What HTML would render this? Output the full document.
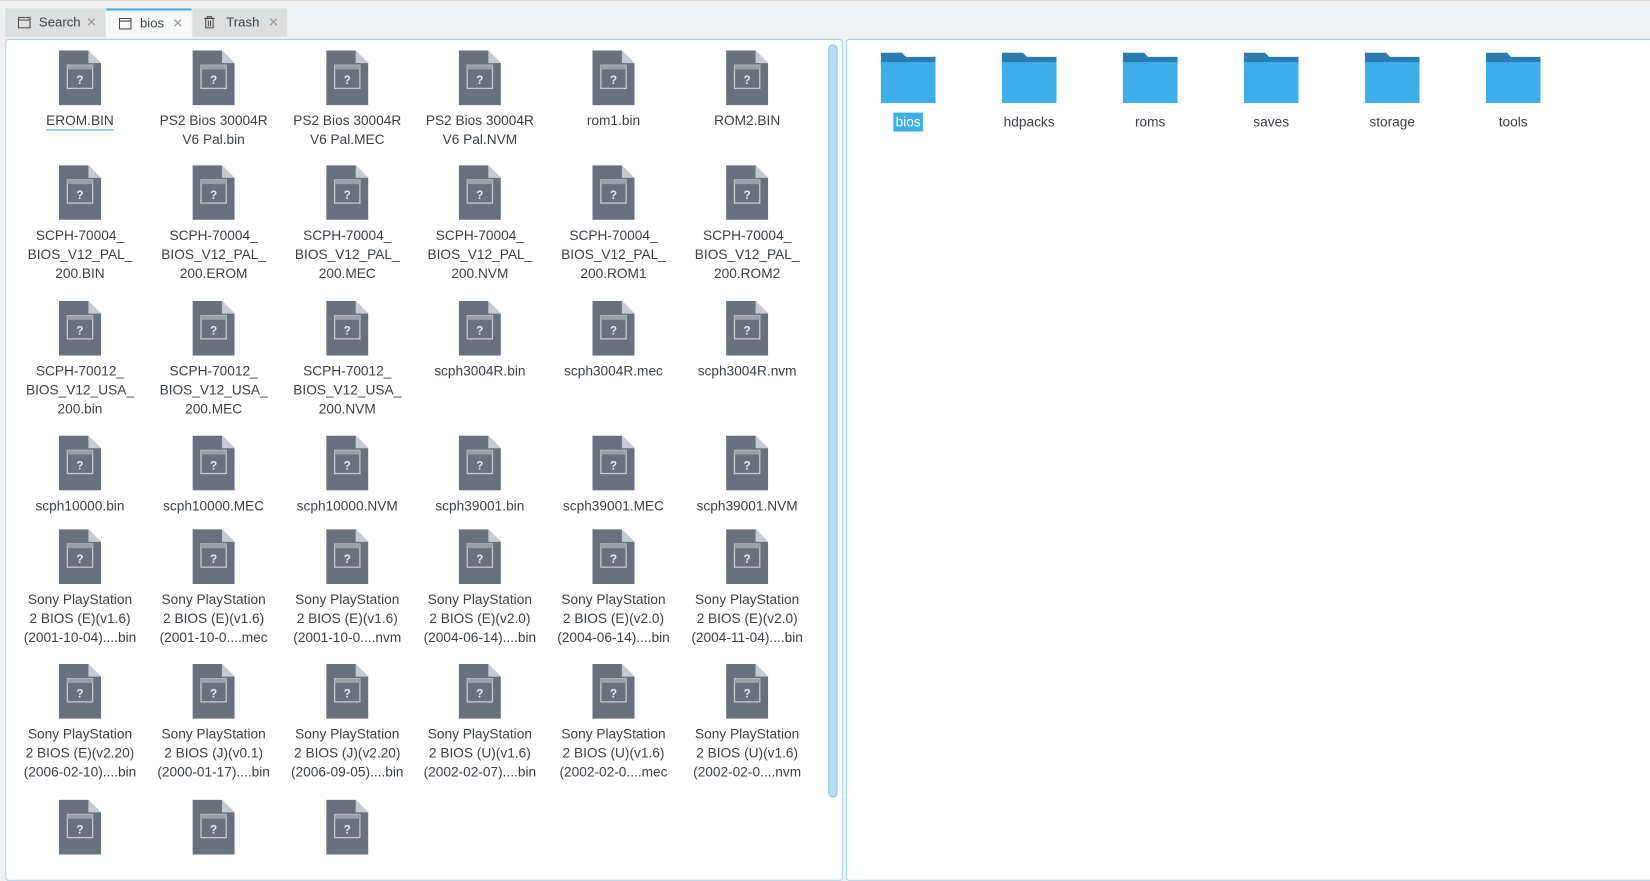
<!DOCTYPE html>
<html><head><meta charset="utf-8">
<style>
*{margin:0;padding:0;box-sizing:border-box}
body{width:1650px;height:825px;background:#eff0f1;overflow:hidden;font-family:"Liberation Sans","DejaVu Sans",sans-serif;color:#31363b}
#w{position:absolute;left:0;top:0;width:1568px;height:784px;transform:scale(1.05230);transform-origin:0 0}
.tabs{position:absolute;left:0;top:0;width:1568px;height:36px;background:#eff0f1;border-top:1px solid #d8d8d8}
.tab{position:absolute;top:7px;height:27px;background:#dcdedf;font-size:12.5px;line-height:27px;padding-left:32px;color:#3c4043}
.tab .x{position:absolute;right:8px;top:0;color:#999;font-size:12px}
.tab.act{background:#f7f8f8;border-top:2px solid #3daee9;line-height:25px}
.pane{position:absolute;top:37px;height:800px;background:#fff;border:1px solid #a9d3ef;border-radius:3px}
.sb{position:absolute;left:787px;top:42px;width:9px;height:716px;background:#b8dcf2;border:1px solid #93c7ea;border-radius:5px}
.c{position:absolute;width:126px;text-align:center;font-size:13px;line-height:18px;color:#3a3f44}
.c svg{display:block;margin:0 auto 6px}
.c span{display:inline-block}
.f svg{margin-bottom:9px}
</style></head><body>
<svg width="0" height="0" style="position:absolute">
<defs>
<symbol id="d" viewBox="0 0 40 52">
<path d="M0 0H28L40 12V52H0Z" fill="#69717e"/>
<path d="M28 0L40 12H28Z" fill="#c7cace"/>
<rect x="8" y="14" width="24" height="22" fill="none" stroke="#c6cad0" stroke-width="1.2"/>
<rect x="8" y="14" width="24" height="4" fill="#9aa0a8"/>
<text x="20" y="32" font-size="11" font-family="Liberation Sans,sans-serif" font-weight="bold" fill="#e6e8eb" text-anchor="middle">?</text>
</symbol>
<symbol id="fo" viewBox="0 0 52 48">
<path d="M0 0H20L24 4H52V14H0Z" fill="#2a7cb3"/>
<rect x="0" y="9" width="52" height="39" fill="#3daee9"/>
</symbol>
</defs></svg>
<div id="w">
<div class="tabs">
<div class="tab" style="left:5px;width:95px">Search<span class="x">✕</span><svg style="position:absolute;left:12px;top:8px" width="12" height="11"><rect x=".5" y=".5" width="11" height="10" fill="none" stroke="#444"/><line x1="0" y1="3" x2="12" y2="3" stroke="#444"/></svg></div>
<div class="tab act" style="left:101px;width:81px">bios<span class="x">✕</span><svg style="position:absolute;left:12px;top:7px" width="12" height="11"><rect x=".5" y=".5" width="11" height="10" fill="none" stroke="#444"/><line x1="0" y1="3" x2="12" y2="3" stroke="#444"/></svg></div>
<div class="tab" style="left:183px;width:90px">Trash<span class="x">✕</span><svg style="position:absolute;left:10px;top:7px" width="12" height="12"><path d="M1 2.5H11M4 2.5V1H8V2.5M2.5 2.5V11.5H9.5V2.5M5 4.5V10M7 4.5V10" fill="none" stroke="#444"/></svg></div>
</div>
<div class="pane" style="left:5px;width:796px"></div>
<div class="pane" style="left:804px;width:780px"></div>
<div class="sb"></div>

<div class="c" style="left:13px;top:48px"><svg width="40" height="52"><use href="#d"/></svg><span style="border-bottom:1px solid #3daee9;line-height:17px">EROM.BIN</span></div>
<div class="c" style="left:140px;top:48px"><svg width="40" height="52"><use href="#d"/></svg>PS2 Bios 30004R<br>V6 Pal.bin</div>
<div class="c" style="left:267px;top:48px"><svg width="40" height="52"><use href="#d"/></svg>PS2 Bios 30004R<br>V6 Pal.MEC</div>
<div class="c" style="left:393px;top:48px"><svg width="40" height="52"><use href="#d"/></svg>PS2 Bios 30004R<br>V6 Pal.NVM</div>
<div class="c" style="left:520px;top:48px"><svg width="40" height="52"><use href="#d"/></svg>rom1.bin</div>
<div class="c" style="left:647px;top:48px"><svg width="40" height="52"><use href="#d"/></svg>ROM2.BIN</div>

<div class="c" style="left:13px;top:157px"><svg width="40" height="52"><use href="#d"/></svg>SCPH-70004_<br>BIOS_V12_PAL_<br>200.BIN</div>
<div class="c" style="left:140px;top:157px"><svg width="40" height="52"><use href="#d"/></svg>SCPH-70004_<br>BIOS_V12_PAL_<br>200.EROM</div>
<div class="c" style="left:267px;top:157px"><svg width="40" height="52"><use href="#d"/></svg>SCPH-70004_<br>BIOS_V12_PAL_<br>200.MEC</div>
<div class="c" style="left:393px;top:157px"><svg width="40" height="52"><use href="#d"/></svg>SCPH-70004_<br>BIOS_V12_PAL_<br>200.NVM</div>
<div class="c" style="left:520px;top:157px"><svg width="40" height="52"><use href="#d"/></svg>SCPH-70004_<br>BIOS_V12_PAL_<br>200.ROM1</div>
<div class="c" style="left:647px;top:157px"><svg width="40" height="52"><use href="#d"/></svg>SCPH-70004_<br>BIOS_V12_PAL_<br>200.ROM2</div>

<div class="c" style="left:13px;top:286px"><svg width="40" height="52"><use href="#d"/></svg>SCPH-70012_<br>BIOS_V12_USA_<br>200.bin</div>
<div class="c" style="left:140px;top:286px"><svg width="40" height="52"><use href="#d"/></svg>SCPH-70012_<br>BIOS_V12_USA_<br>200.MEC</div>
<div class="c" style="left:267px;top:286px"><svg width="40" height="52"><use href="#d"/></svg>SCPH-70012_<br>BIOS_V12_USA_<br>200.NVM</div>
<div class="c" style="left:393px;top:286px"><svg width="40" height="52"><use href="#d"/></svg>scph3004R.bin</div>
<div class="c" style="left:520px;top:286px"><svg width="40" height="52"><use href="#d"/></svg>scph3004R.mec</div>
<div class="c" style="left:647px;top:286px"><svg width="40" height="52"><use href="#d"/></svg>scph3004R.nvm</div>

<div class="c" style="left:13px;top:414px"><svg width="40" height="52"><use href="#d"/></svg>scph10000.bin</div>
<div class="c" style="left:140px;top:414px"><svg width="40" height="52"><use href="#d"/></svg>scph10000.MEC</div>
<div class="c" style="left:267px;top:414px"><svg width="40" height="52"><use href="#d"/></svg>scph10000.NVM</div>
<div class="c" style="left:393px;top:414px"><svg width="40" height="52"><use href="#d"/></svg>scph39001.bin</div>
<div class="c" style="left:520px;top:414px"><svg width="40" height="52"><use href="#d"/></svg>scph39001.MEC</div>
<div class="c" style="left:647px;top:414px"><svg width="40" height="52"><use href="#d"/></svg>scph39001.NVM</div>

<div class="c" style="left:13px;top:503px"><svg width="40" height="52"><use href="#d"/></svg>Sony PlayStation<br>2 BIOS (E)(v1.6)<br>(2001-10-04)....bin</div>
<div class="c" style="left:140px;top:503px"><svg width="40" height="52"><use href="#d"/></svg>Sony PlayStation<br>2 BIOS (E)(v1.6)<br>(2001-10-0....mec</div>
<div class="c" style="left:267px;top:503px"><svg width="40" height="52"><use href="#d"/></svg>Sony PlayStation<br>2 BIOS (E)(v1.6)<br>(2001-10-0....nvm</div>
<div class="c" style="left:393px;top:503px"><svg width="40" height="52"><use href="#d"/></svg>Sony PlayStation<br>2 BIOS (E)(v2.0)<br>(2004-06-14)....bin</div>
<div class="c" style="left:520px;top:503px"><svg width="40" height="52"><use href="#d"/></svg>Sony PlayStation<br>2 BIOS (E)(v2.0)<br>(2004-06-14)....bin</div>
<div class="c" style="left:647px;top:503px"><svg width="40" height="52"><use href="#d"/></svg>Sony PlayStation<br>2 BIOS (E)(v2.0)<br>(2004-11-04)....bin</div>

<div class="c" style="left:13px;top:631px"><svg width="40" height="52"><use href="#d"/></svg>Sony PlayStation<br>2 BIOS (E)(v2.20)<br>(2006-02-10)....bin</div>
<div class="c" style="left:140px;top:631px"><svg width="40" height="52"><use href="#d"/></svg>Sony PlayStation<br>2 BIOS (J)(v0.1)<br>(2000-01-17)....bin</div>
<div class="c" style="left:267px;top:631px"><svg width="40" height="52"><use href="#d"/></svg>Sony PlayStation<br>2 BIOS (J)(v2.20)<br>(2006-09-05)....bin</div>
<div class="c" style="left:393px;top:631px"><svg width="40" height="52"><use href="#d"/></svg>Sony PlayStation<br>2 BIOS (U)(v1.6)<br>(2002-02-07)....bin</div>
<div class="c" style="left:520px;top:631px"><svg width="40" height="52"><use href="#d"/></svg>Sony PlayStation<br>2 BIOS (U)(v1.6)<br>(2002-02-0....mec</div>
<div class="c" style="left:647px;top:631px"><svg width="40" height="52"><use href="#d"/></svg>Sony PlayStation<br>2 BIOS (U)(v1.6)<br>(2002-02-0....nvm</div>

<div class="c" style="left:13px;top:760px"><svg width="40" height="52"><use href="#d"/></svg></div>
<div class="c" style="left:140px;top:760px"><svg width="40" height="52"><use href="#d"/></svg></div>
<div class="c" style="left:267px;top:760px"><svg width="40" height="52"><use href="#d"/></svg></div>

<div class="c f" style="left:800px;top:50px"><svg width="52" height="48"><use href="#fo"/></svg><span style="background:#3daee9;color:#fff;padding:0 2px">bios</span></div>
<div class="c f" style="left:915px;top:50px"><svg width="52" height="48"><use href="#fo"/></svg>hdpacks</div>
<div class="c f" style="left:1030px;top:50px"><svg width="52" height="48"><use href="#fo"/></svg>roms</div>
<div class="c f" style="left:1145px;top:50px"><svg width="52" height="48"><use href="#fo"/></svg>saves</div>
<div class="c f" style="left:1260px;top:50px"><svg width="52" height="48"><use href="#fo"/></svg>storage</div>
<div class="c f" style="left:1375px;top:50px"><svg width="52" height="48"><use href="#fo"/></svg>tools</div>
</div>
</body></html>
